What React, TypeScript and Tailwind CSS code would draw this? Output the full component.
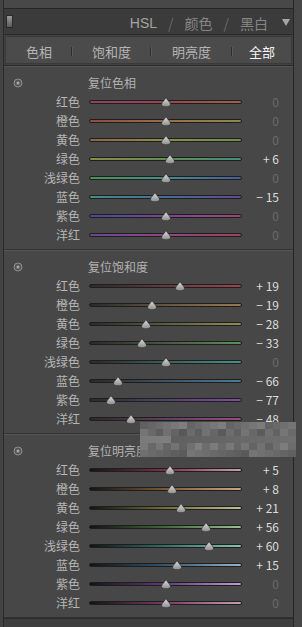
import React from 'react';

type Row = { label: string; value: number; track: string };
type Section = { title: string; rows: Row[] };

const sections: Section[] = [
  {
    title: '复位色相',
    rows: [
      { label: '红色', value: 0, track: 'bg-[linear-gradient(to_right,#8c4262,#9a4450,#9a6444)]' },
      { label: '橙色', value: 0, track: 'bg-[linear-gradient(to_right,#924a44,#967048,#8e884a)]' },
      { label: '黄色', value: 0, track: 'bg-[linear-gradient(to_right,#926444,#8e8a48,#6c8e4a)]' },
      { label: '绿色', value: 6, track: 'bg-[linear-gradient(to_right,#8e8a48,#608e52,#448e7c)]' },
      { label: '浅绿色', value: 0, track: 'bg-[linear-gradient(to_right,#4a9252,#448e8c,#485c9a)]' },
      { label: '蓝色', value: -15, track: 'bg-[linear-gradient(to_right,#448e88,#486c96,#624896)]' },
      { label: '紫色', value: 0, track: 'bg-[linear-gradient(to_right,#484a96,#784896,#9a4870)]' },
      { label: '洋红', value: 0, track: 'bg-[linear-gradient(to_right,#684892,#904884,#9a4458)]' },
    ],
  },
  {
    title: '复位饱和度',
    rows: [
      { label: '红色', value: 19, track: 'bg-[linear-gradient(to_right,#2a2a2a,#643c40,#a0424e)]' },
      { label: '橙色', value: -19, track: 'bg-[linear-gradient(to_right,#2a2a2a,#645642,#9a784e)]' },
      { label: '黄色', value: -28, track: 'bg-[linear-gradient(to_right,#2a2a2a,#5e5c40,#928e50)]' },
      { label: '绿色', value: -33, track: 'bg-[linear-gradient(to_right,#2a2a2a,#465a40,#5e8e5a)]' },
      { label: '浅绿色', value: 0, track: 'bg-[linear-gradient(to_right,#2a2a2a,#3e5e5a,#449288)]' },
      { label: '蓝色', value: -66, track: 'bg-[linear-gradient(to_right,#2a2a2a,#3e5262,#487c9a)]' },
      { label: '紫色', value: -77, track: 'bg-[linear-gradient(to_right,#2a2a2a,#54426a,#844aa2)]' },
      { label: '洋红', value: -48, track: 'bg-[linear-gradient(to_right,#2a2a2a,#624060,#9a4a88)]' },
    ],
  },
  {
    title: '复位明亮度',
    rows: [
      { label: '红色', value: 5, track: 'bg-[linear-gradient(to_right,#141414,#7e3244,#c8a0a8)]' },
      { label: '橙色', value: 8, track: 'bg-[linear-gradient(to_right,#141414,#7e5a34,#cca684)]' },
      { label: '黄色', value: 21, track: 'bg-[linear-gradient(to_right,#141414,#747036,#c0be94)]' },
      { label: '绿色', value: 56, track: 'bg-[linear-gradient(to_right,#141414,#42663a,#9cbe94)]' },
      { label: '浅绿色', value: 60, track: 'bg-[linear-gradient(to_right,#141414,#307266,#88c4b2)]' },
      { label: '蓝色', value: 15, track: 'bg-[linear-gradient(to_right,#141414,#34546e,#98b4c8)]' },
      { label: '紫色', value: 0, track: 'bg-[linear-gradient(to_right,#141414,#663a7e,#bc9ccc)]' },
      { label: '洋红', value: 0, track: 'bg-[linear-gradient(to_right,#141414,#7a3a64,#c89cb2)]' },
    ],
  },
];

const fmt = (v: number) => (v === 0 ? '0' : v > 0 ? `+ ${v}` : `− ${-v}`);

function Thumb({ left }: { left: number }) {
  return (
    <svg className="absolute top-[5px]" style={{ left }} width="10" height="10" viewBox="0 0 10 10">
      <defs>
        <linearGradient id="thumb" x1="0" y1="0" x2="0" y2="1">
          <stop offset="0" stopColor="#e2e2e2" />
          <stop offset="1" stopColor="#8c8c8c" />
        </linearGradient>
      </defs>
      <path
        d="M5 0.4 C6 3 9.5 5.4 9.5 7.4 C9.5 9.2 7.6 9.7 5 9.7 C2.4 9.7 0.5 9.2 0.5 7.4 C0.5 5.4 4 3 5 0.4 Z"
        fill="url(#thumb)"
        stroke="#2a2a2a"
        strokeWidth="0.6"
      />
    </svg>
  );
}

function SliderRow({ label, value, track }: Row) {
  // track starts at x=89, thumb centre at 166 for 0, 0.72px per step
  const centre = 77 + value * 0.72;
  return (
    <div className="flex h-[19px] items-center">
      <div className="w-[76px] text-right text-[12px] leading-none text-[#b6b6b6]">{label}</div>
      <div className="relative ml-[9px] h-[19px] w-[153px]">
        <div className={`absolute left-0 right-0 top-[8px] h-[4px] rounded-full border border-[#1e1e1e] ${track}`} />
        <Thumb left={centre - 5} />
      </div>
      <div
        className={`w-[37px] text-right text-[12px] leading-none ${
          value === 0 ? 'text-[#6a6a6a]' : 'text-[#dcdcdc]'
        }`}
      >
        {fmt(value)}
      </div>
    </div>
  );
}

function ResetIcon() {
  return (
    <svg width="10" height="10" viewBox="0 0 10 10">
      <circle cx="5" cy="5" r="4" fill="#555" stroke="#8e8e8e" strokeWidth="1" />
      <circle cx="5" cy="5" r="1.5" fill="#a8a8a8" />
    </svg>
  );
}

function Mosaic() {
  const cells = [];
  for (let r = 0; r < 5; r++) {
    for (let c = 0; c < 20; c++) {
      const h = (c * 37 + r * 91 + c * r * 13) % 31;
      const base = r === 1 || r === 4 ? 0x58 : 0x60;
      const g = base + h;
      cells.push(
        <div key={`${r}-${c}`} style={{ backgroundColor: `rgb(${g},${g},${g})` }} />
      );
    }
  }
  return (
    <div className="absolute left-[140px] top-[422px] grid h-[35px] w-[156px] grid-cols-[repeat(20,1fr)] grid-rows-5">
      {cells}
    </div>
  );
}

export default function App() {
  return (
    <div className="relative flex h-[627px] w-[302px] overflow-hidden bg-[#404040] font-['Noto_Sans_CJK_SC','Noto_Sans',sans-serif]">
      <div className="w-[3px] bg-[#434343]" />
      <div className="flex w-[290px] flex-col border-l border-[#2a2a2a]">
        {/* top strip */}
        <div className="h-[9px] border-b border-[#262626] bg-[#484848]" />

        {/* panel header */}
        <div className="flex h-[26px] items-center border-b border-[#2a2a2a] bg-[#3b3b3b] pl-[2px] pr-[3px]">
          <div className="h-[13px] w-[7px] border border-[#2a2a2a] bg-[linear-gradient(to_bottom,#9a9a9a,#5a5a5a)]" />
          <div className="ml-auto flex items-center pt-[2px] text-[14px] leading-none">
            <span className="text-[#a4a4a4] font-['Liberation_Sans',sans-serif]">HSL</span>
            <span className="mx-[11px] text-[#6a6a6a]">/</span>
            <span className="text-[#868686]">颜色</span>
            <span className="mx-[11px] text-[#6a6a6a]">/</span>
            <span className="text-[#868686]">黑白</span>
            <svg className="ml-[14px]" width="8" height="7" viewBox="0 0 8 7">
              <polygon points="0,0 8,0 4,7" fill="#a6a6a6" />
            </svg>
          </div>
        </div>

        {/* tabs */}
        <div className="flex h-[31px] border-b border-[#2a2a2a] bg-[#424242] px-[1px] py-[1px]">
          <div className="flex flex-1 items-center border border-[#3a3a3a] bg-[#4b4b4b] pt-[2px] text-[13px] leading-none text-[#b4b4b4]">
            <div className="flex w-[65px] justify-center pl-[1px]">色相</div>
            <div className="h-[9px] w-[2px] border-l border-[#2e2e2e] bg-[#5a5a5a]" />
            <div className="flex w-[77px] justify-center">饱和度</div>
            <div className="h-[9px] w-[2px] border-l border-[#2e2e2e] bg-[#5a5a5a]" />
            <div className="flex w-[79px] justify-center">明亮度</div>
            <div className="h-[9px] w-[2px] border-l border-[#2e2e2e] bg-[#5a5a5a]" />
            <div className="flex flex-1 justify-center text-[#f4f4f4]">全部</div>
          </div>
        </div>

        {/* sections */}
        {sections.map((s) => (
          <div key={s.title} className="h-[184px] border-b border-[#333] bg-[#474747] pb-[6px] pt-[7px] shadow-[inset_0_1px_0_#555]">
            <div className="flex h-[19px] items-center">
              <div className="flex w-[19px] justify-end">
                <ResetIcon />
              </div>
              <div className="ml-[65px] text-[12px] leading-none text-[#b2b2b2]">{s.title}</div>
            </div>
            {s.rows.map((r) => (
              <SliderRow key={r.label} {...r} />
            ))}
          </div>
        ))}
        <div className="flex-1 border-t border-[#2a2a2a] bg-[#3e3e3e]" />
      </div>
      <div className="flex-1 border-l border-[#262626] bg-[#474747]" />
      <Mosaic />
    </div>
  );
}
